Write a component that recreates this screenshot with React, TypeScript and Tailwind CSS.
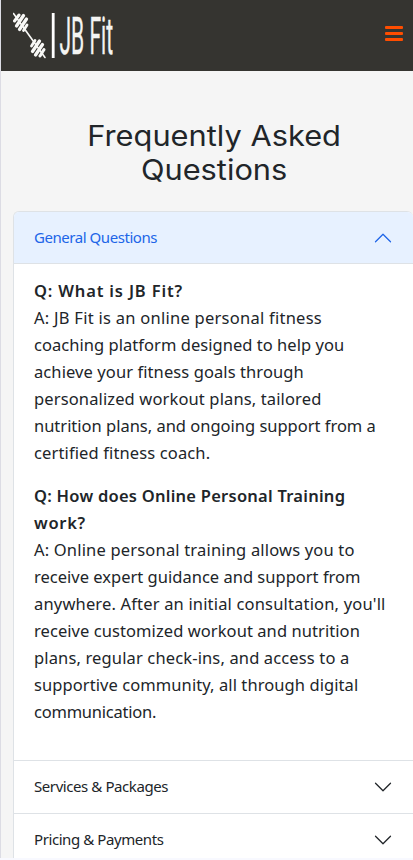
import { ReactNode } from "react";

function Chevron({ open = false }: { open?: boolean }) {
  return (
    <svg
      viewBox="0 0 16 16"
      className={open ? "h-5 w-5 rotate-180 text-[#2065e8]" : "h-5 w-5 text-[#212529]"}
      fill="none"
      stroke="currentColor"
      strokeLinecap="round"
      strokeLinejoin="round"
    >
      <path d="m2 5 6 6 6-6" />
    </svg>
  );
}

function Logo() {
  return (
    <svg width="120" height="71" viewBox="0 -12 120 71" role="img" aria-label="JB Fit" className="block">
      <g stroke="#f8f8f6" strokeLinecap="round" fill="none">
        <path d="M0.500 1.500 32 45.500" strokeWidth="1.600" />
        <path d="M1.500 9 6 3" strokeWidth="3" />
        <path d="M3.500 14 10.500 3.500" strokeWidth="3.300" />
        <path d="M6.500 17.500 13.500 7" strokeWidth="3.300" />
        <path d="M10.500 18.500 14 13" strokeWidth="2.800" />
        <path d="M18.500 34 22 28.500" strokeWidth="2.800" />
        <path d="M19.500 39.500 26.500 29" strokeWidth="3.300" />
        <path d="M22.500 43 29.500 32.500" strokeWidth="3.300" />
        <path d="M27 44 31 37.500" strokeWidth="3" />
      </g>
      <rect x="38.800" y="1" width="2.800" height="45" fill="#fff" />
      <text
        transform="translate(46.500 41.700) scale(0.405 1)"
        fontFamily="Roboto, sans-serif"
        fontSize="52"
        fontWeight="400"
        fill="#f4f4f2"
        stroke="#f4f4f2"
        strokeWidth="0.400"
      >
        JB Fit
      </text>
    </svg>
  );
}

function Line({ children, className }: { children: ReactNode; className: string }) {
  return <span className={`block whitespace-nowrap ${className}`}>{children}</span>;
}

function Section({ title }: { title: string }) {
  return (
    <button className="flex h-[53px] w-full items-center justify-between border-t border-[#dee2e6] bg-white pr-5 pl-5 text-left text-[15px] tracking-[-0.42px]">
      <span className="pb-[2px]">{title}</span>
      <Chevron />
    </button>
  );
}

export default function App() {
  return (
    <div className="flex h-[860px] w-full flex-col overflow-hidden bg-[#f8f9ff] font-['Noto_Sans',sans-serif] text-[#212529]">
      <div className="flex h-[858px] flex-col overflow-hidden border-l border-[#dcdce4] bg-[#f5f5f5]">
        <header className="flex h-[71px] shrink-0 items-start justify-between bg-[#353430] pr-[10px] pl-3">
          <Logo />
          <button aria-label="Menu" className="mt-[26px] flex w-[18px] flex-col gap-[3px]">
            <span className="h-[3px] rounded-[1px] bg-[#ff4d00]" />
            <span className="h-[3px] rounded-[1px] bg-[#ff4d00]" />
            <span className="h-[3px] rounded-[1px] bg-[#ff4d00]" />
          </button>
        </header>
        <main className="pt-12 pl-3">
          <h1 className="scale-x-110 pl-[2px] text-center font-['Inter',sans-serif] text-[28px] leading-[34px] font-normal">
            <Line className="tracking-normal">Frequently Asked</Line>
            <Line className="tracking-normal">Questions</Line>
          </h1>
          <div className="mt-6 overflow-hidden rounded-t-md border-t border-l border-[#dee2e6] bg-white">
            <button className="flex h-[52px] w-full items-center justify-between border-b border-[#dee2e6] bg-[#e7f1ff] pr-5 pl-5 text-left text-[15px] tracking-[-0.45px] text-[#2065e8]">
              <span>General Questions</span>
              <Chevron open />
            </button>
            <div className="h-[496px] pt-[13px] pl-5 text-[16.500px] leading-[27px]">
              <p className="mb-4">
                <strong className="font-semibold">
                  <Line className="tracking-[0.83px]">Q: What is JB Fit?</Line>
                </strong>
                <Line className="tracking-[0.26px]">A: JB Fit is an online personal fitness</Line>
                <Line className="tracking-[0.04px]">coaching platform designed to help you</Line>
                <Line className="tracking-[0.09px]">achieve your fitness goals through</Line>
                <Line className="tracking-[0.13px]">personalized workout plans, tailored</Line>
                <Line className="tracking-[-0.01px]">nutrition plans, and ongoing support from a</Line>
                <Line className="tracking-[0.13px]">certified fitness coach.</Line>
              </p>
              <p>
                <strong className="font-semibold">
                  <Line className="tracking-[0.25px]">Q: How does Online Personal Training</Line>
                  <Line className="tracking-[0.7px]">work?</Line>
                </strong>
                <Line className="tracking-[0.18px]">A: Online personal training allows you to</Line>
                <Line className="tracking-[0.01px]">receive expert guidance and support from</Line>
                <Line className="tracking-[0.17px]">anywhere. After an initial consultation, you'll</Line>
                <Line className="tracking-[0.07px]">receive customized workout and nutrition</Line>
                <Line className="tracking-[0.14px]">plans, regular check-ins, and access to a</Line>
                <Line className="tracking-[0.08px]">supportive community, all through digital</Line>
                <Line className="tracking-[-0.23px]">communication.</Line>
              </p>
            </div>
            <Section title="Services & Packages" />
            <Section title="Pricing & Payments" />
          </div>
        </main>
      </div>
    </div>
  );
}
